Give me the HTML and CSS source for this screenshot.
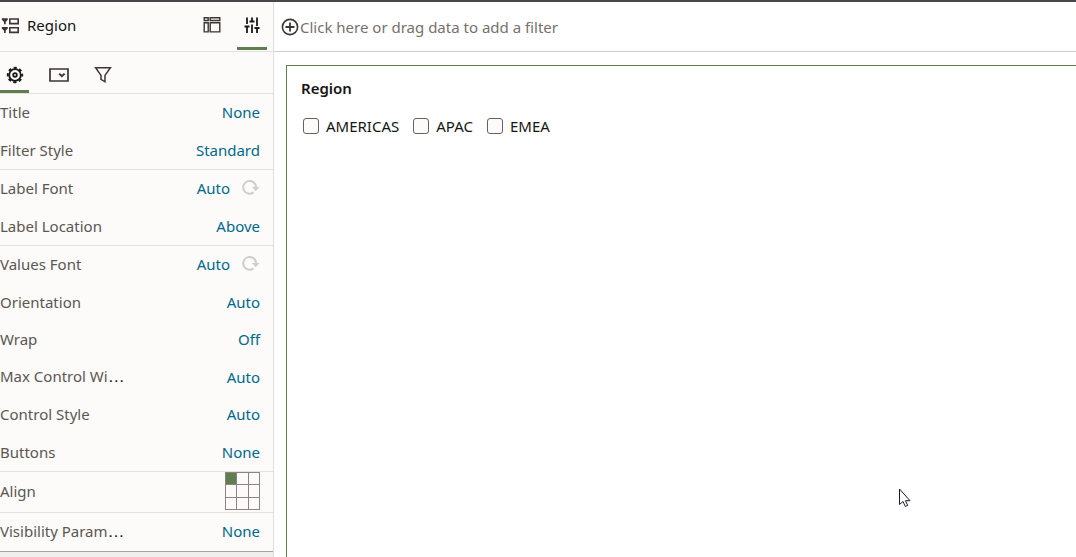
FILE: index.html
```html
<!DOCTYPE html>
<html lang="en">
<head>
    <meta charset="UTF-8">
    <meta name="viewport" content="width=device-width, initial-scale=1.0">
    <title>Region</title>
    <link rel="stylesheet" href="styles.css">
</head>
<body>
    <aside class="sidebar">
        <header class="panel-header">
            <svg class="panel-icon" width="18" height="18" viewBox="0 0 18 18" fill="none" stroke="#3a3632" stroke-width="1.6">
                <path d="M8.8 2h8.4v4.6H8.8zM8.8 10.8h8.4v4.6H8.8z"/>
                <path d="M.8 1.2h6v1.5L4.7 5v2.2H3V5L.8 2.7zM.8 10h6v1.5l-2.1 2.3V16H3v-2.2L.8 11.5z" fill="#3a3632" stroke="none"/>
            </svg>
            <h1>Region</h1>
            <button class="view-button" aria-label="Layout">
                <svg width="18" height="18" viewBox="0 0 18 18" fill="none" stroke="#3a3632" stroke-width="1.4">
                    <path d="M1.2 1.7h4v2.8h-4zM7.2 1.7h9.6v2.8H7.2zM1.2 6.7h4v9.2h-4zM7.2 6.7h9.6v9.2H7.2z"/>
                </svg>
            </button>
            <button class="view-button active" aria-label="Properties">
                <svg width="18" height="18" viewBox="0 0 18 18" fill="none" stroke="#1b1917" stroke-width="1.8">
                    <path d="M4 1.5V8M4 10v7M9 1.5v4M9 8.5V17M14 1.5V10M14 12v5"/>
                    <path d="M1.5 10.5h5M6.5 5.5h5M11.5 12h5"/>
                </svg>
            </button>
        </header>

        <nav class="tabs">
            <button class="tab active" aria-label="General">
                <svg width="18" height="18" viewBox="0 0 18 18" fill="none" stroke="#1b1917">
                    <circle cx="9" cy="9" r="5.8" stroke-width="1.8"/>
                    <circle cx="9" cy="9" r="7.2" stroke-width="2" stroke-dasharray="3.1 2.55" stroke-dashoffset="1.5"/>
                    <circle cx="9" cy="9" r="1.8" stroke-width="1.8"/>
                </svg>
            </button>
            <button class="tab" aria-label="Control">
                <svg width="20" height="18" viewBox="0 0 20 18" fill="none" stroke="#3a3632" stroke-width="1.7">
                    <path d="M1 3h18v12H1z"/>
                    <path d="M10.2 7.6l2.7 2.6 2.7-2.6" stroke-width="2"/>
                </svg>
            </button>
            <button class="tab" aria-label="Filters">
                <svg width="18" height="18" viewBox="0 0 18 18" fill="none" stroke="#3a3632" stroke-width="1.5">
                    <path d="M1.6 1.8h14.8L11 9.4v6.4l-4-2.4v-4z"/>
                </svg>
            </button>
        </nav>

        <section class="group">
            <div class="row"><span class="name">Title</span><button class="value">None</button></div>
            <div class="row"><span class="name">Filter Style</span><button class="value">Standard</button></div>
        </section>
        <section class="group">
            <div class="row">
                <span class="name">Label Font</span>
                <button class="value">Auto</button>
                <button class="reset" aria-label="Reset label font">
                    <svg width="18" height="18" viewBox="0 0 18 18"><path d="M11.5 13.4A6.4 6.4 0 1 1 14 8" fill="none" stroke="#d0cecc" stroke-width="2"/><path d="M10 8h7.5l-3.8 4.2z" fill="#d0cecc"/></svg>
                </button>
            </div>
            <div class="row"><span class="name">Label Location</span><button class="value">Above</button></div>
        </section>
        <section class="group">
            <div class="row">
                <span class="name">Values Font</span>
                <button class="value">Auto</button>
                <button class="reset" aria-label="Reset values font">
                    <svg width="18" height="18" viewBox="0 0 18 18"><path d="M11.5 13.4A6.4 6.4 0 1 1 14 8" fill="none" stroke="#d0cecc" stroke-width="2"/><path d="M10 8h7.5l-3.8 4.2z" fill="#d0cecc"/></svg>
                </button>
            </div>
            <div class="row"><span class="name">Orientation</span><button class="value">Auto</button></div>
            <div class="row"><span class="name">Wrap</span><button class="value">Off</button></div>
            <div class="row"><span class="name">Max Control Wi<span class="dots">…</span></span><button class="value">Auto</button></div>
            <div class="row"><span class="name">Control Style</span><button class="value">Auto</button></div>
            <div class="row"><span class="name">Buttons</span><button class="value">None</button></div>
        </section>
        <section class="group">
            <div class="row align-row">
                <span class="name">Align</span>
                <div class="align-grid">
                    <button class="selected" aria-label="Top left"></button>
                    <button aria-label="Top center"></button>
                    <button aria-label="Top right"></button>
                    <button aria-label="Middle left"></button>
                    <button aria-label="Middle center"></button>
                    <button aria-label="Middle right"></button>
                    <button aria-label="Bottom left"></button>
                    <button aria-label="Bottom center"></button>
                    <button aria-label="Bottom right"></button>
                </div>
            </div>
        </section>
        <section class="group last">
            <div class="row"><span class="name">Visibility Param<span class="dots">…</span></span><button class="value">None</button></div>
        </section>
    </aside>

    <main class="content">
        <button class="filter-bar">
            <svg width="18" height="18" viewBox="0 0 18 18" fill="none" stroke="#3a3632" stroke-width="1.6">
                <circle cx="9" cy="9" r="7.6"/>
                <path d="M9 4.5v9M4.5 9h9" stroke-width="1.8"/>
            </svg>
            <span>Click here or drag data to add a filter</span>
        </button>
        <section class="canvas">
            <h2>Region</h2>
            <div class="options">
                <label><input type="checkbox"> AMERICAS</label>
                <label><input type="checkbox"> APAC</label>
                <label><input type="checkbox"> EMEA</label>
            </div>
        </section>
    </main>

    <svg class="cursor" width="14" height="20" viewBox="0 0 14 20" fill="#fff" stroke="#1d1b2b">
        <path d="M1.5 1v15.5l3.5-3 2.3 5 2.4-1.2-2.3-4.6H12z"/>
    </svg>
</body>
</html>
```
FILE: styles.css
```css
* {
    box-sizing: border-box;
}
body {
    margin: 0;
    min-height: 100vh;
    display: flex;
    border-top: 2px solid #47464e;
    background-color: #fff;
    color: #161513;
    font-family: "Noto Sans", sans-serif;
    font-size: 15px;
    line-height: 20px;
}
h1, h2 {
    margin: 0;
    font-size: 15px;
}
button {
    padding: 0;
    border: 0;
    background: none;
    font: inherit;
    cursor: pointer;
}
svg {
    display: block;
}

/* Properties panel */
.sidebar {
    width: 274px;
    flex-shrink: 0;
    background-color: #f0efed;
    border-right: 1px solid #dfdddb;
}
.panel-header {
    display: flex;
    align-items: center;
    height: 50px;
    padding-right: 6px;
    background-color: #fcfbfa;
    border-bottom: 1px solid #e4e2e0;
}
.panel-icon {
    margin: 0 0 2px 1px;
}
.panel-header h1 {
    margin: 0 auto 0 8px;
    padding-bottom: 4px;
    font-weight: 400;
}
.view-button {
    display: flex;
    align-items: center;
    justify-content: center;
    width: 30px;
    height: 47px;
    margin-left: 10px;
    border-bottom: 3px solid transparent;
}
.view-button.active,
.tab.active {
    border-bottom-color: #5f7d4f;
}
.tabs {
    display: flex;
    gap: 15px;
    height: 42px;
    background-color: #fcfbfa;
    border-bottom: 1px solid #e4e2e0;
}
.tab {
    display: flex;
    align-items: center;
    justify-content: center;
    width: 29px;
    height: 41px;
    padding-top: 8px;
    border-bottom: 3px solid transparent;
}
.group {
    background-color: #fcfbfa;
    border-bottom: 1px solid #e4e2e0;
}
.group.last {
    border-bottom-color: #a5a3a0;
}
.row {
    display: flex;
    align-items: center;
    height: 38px;
    padding: 0 13px 2px 0;
}
.row:nth-child(even) {
    height: 37px;
}
.name {
    margin-right: auto;
    color: #5b5652;
}
.dots {
    color: #161513;
    font-family: "Liberation Sans", sans-serif;
    font-size: 17px;
}
.value {
    color: #00688c;
}
.reset {
    margin-left: 12px;
}
.row.align-row {
    height: 40px;
}
.align-grid {
    display: grid;
    grid-template-columns: repeat(3, 1fr);
    gap: 1px;
    width: 35px;
    height: 38px;
    padding: 1px;
    background-color: #8b8580;
}
.align-grid button {
    background-color: #fcfbfa;
}
.align-grid .selected {
    background-color: #5f7d4f;
}

/* Canvas side */
.content {
    display: flex;
    flex: 1;
    flex-direction: column;
    min-width: 0;
}
.filter-bar {
    display: flex;
    align-items: center;
    gap: 1px;
    height: 50px;
    padding-left: 7px;
    border-bottom: 1px solid #d0cecc;
    color: #76716d;
    text-align: left;
}
.canvas {
    flex: 1;
    margin: 13px 0 0 12px;
    padding: 12px 14px;
    border: solid #5f7d4f;
    border-width: 1px 0 0 1px;
}
.canvas h2 {
    font-weight: 600;
}
.options {
    display: flex;
    gap: 12px;
    margin-top: 18px;
}
.options label {
    display: flex;
    align-items: center;
    gap: 7px;
}
.options input {
    appearance: none;
    width: 16px;
    height: 16px;
    margin: 0 0 0 2px;
    border: 1px solid #66625e;
    border-radius: 3px;
    background-color: #fcfbfa;
}

.cursor {
    position: absolute;
    left: 898px;
    top: 488px;
}
```
